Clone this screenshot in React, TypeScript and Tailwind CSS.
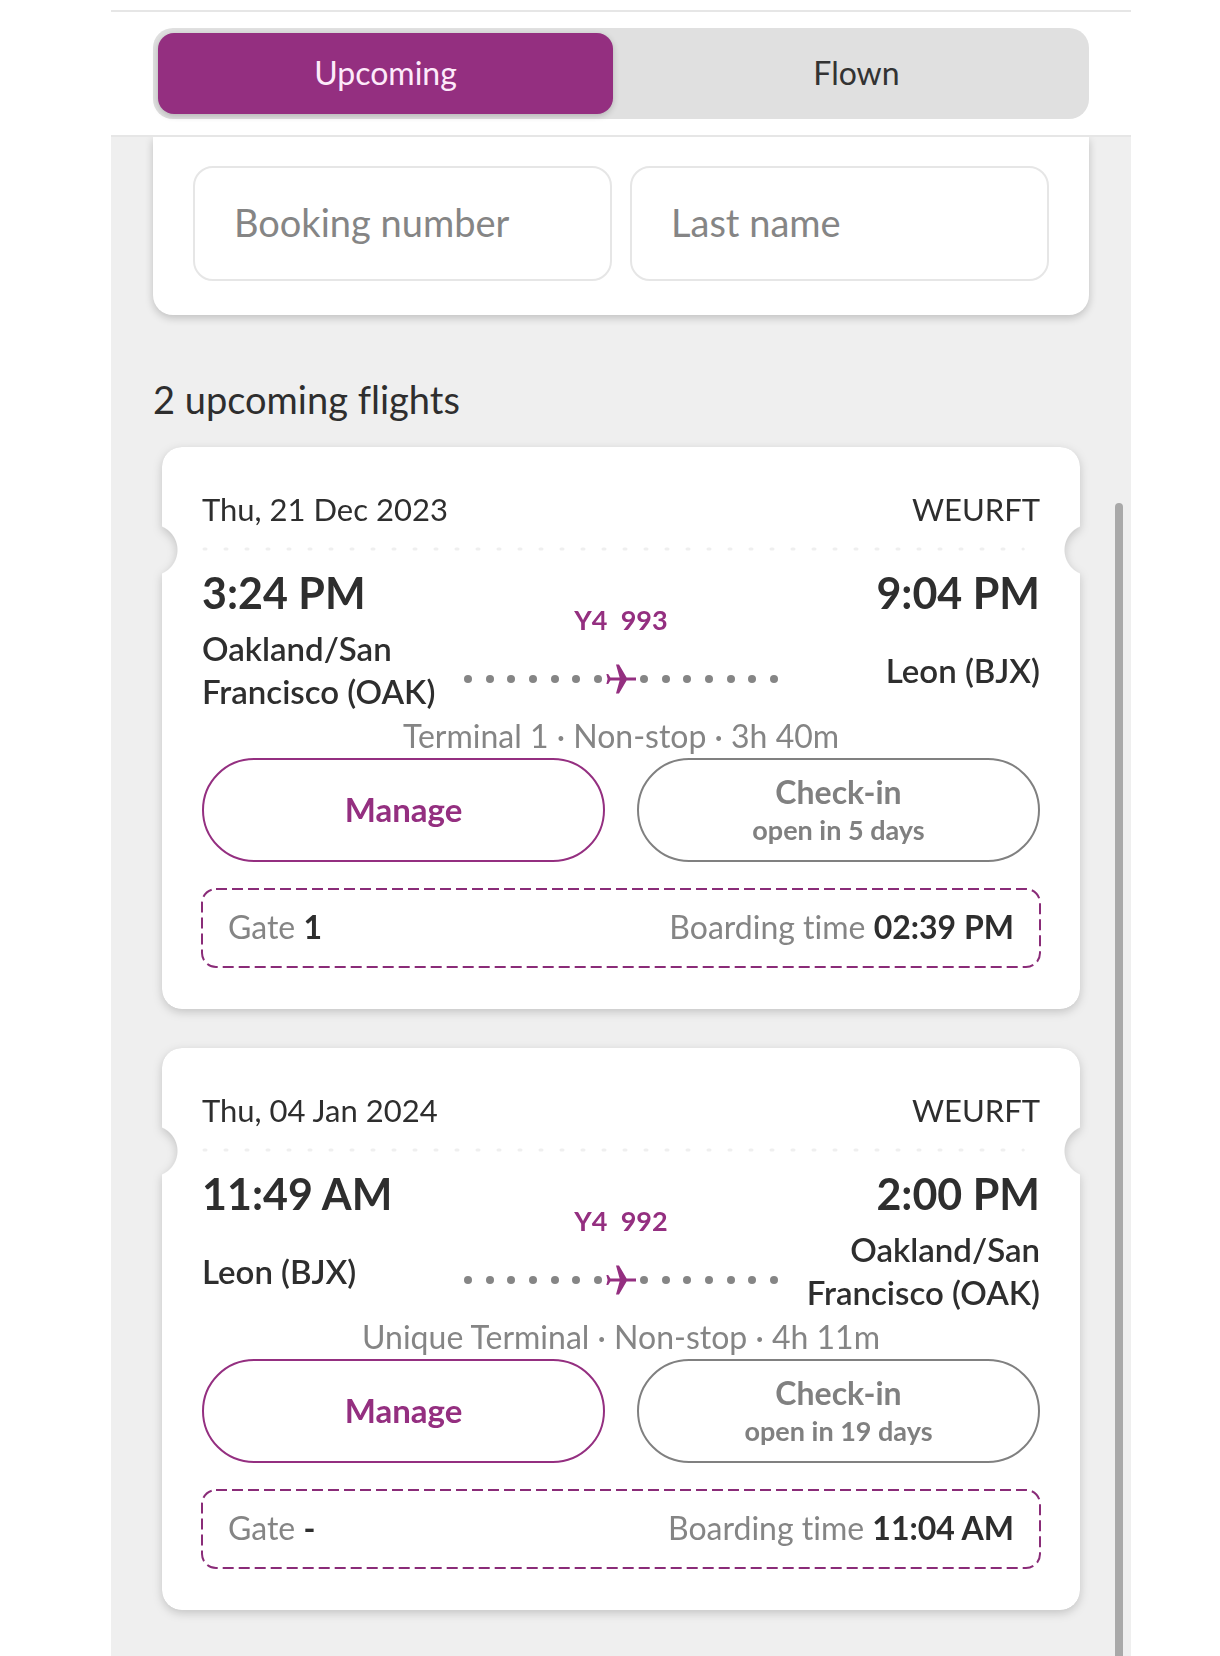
import { useState } from 'react'
import clsx from 'clsx'

interface Stop {
  time: string
  place: string
}

interface Flight {
  date: string
  booking: string
  code: string
  from: Stop
  to: Stop
  details: string
  checkIn: string
  gate: string
  boarding: string
}

const flights: Flight[] = [
  {
    date: 'Thu, 21 Dec 2023',
    booking: 'WEURFT',
    code: 'Y4  993',
    from: { time: '3:24 PM', place: 'Oakland/San Francisco (OAK)' },
    to: { time: '9:04 PM', place: 'Leon (BJX)' },
    details: 'Terminal 1 · Non-stop · 3h 40m',
    checkIn: 'open in 5 days',
    gate: '1',
    boarding: '02:39 PM',
  },
  {
    date: 'Thu, 04 Jan 2024',
    booking: 'WEURFT',
    code: 'Y4  992',
    from: { time: '11:49 AM', place: 'Leon (BJX)' },
    to: { time: '2:00 PM', place: 'Oakland/San Francisco (OAK)' },
    details: 'Unique Terminal · Non-stop · 4h 11m',
    checkIn: 'open in 19 days',
    gate: '-',
    boarding: '11:04 AM',
  },
]

const tabs = ['Upcoming', 'Flown']

function Tabs() {
  const [active, setActive] = useState('Upcoming')

  return (
    <div role="tablist" className="grid grid-cols-2 gap-4 rounded-[20px] bg-[#e0e0e0] p-[5px]">
      {tabs.map((tab) => (
        <button
          key={tab}
          type="button"
          role="tab"
          aria-selected={active === tab}
          onClick={() => setActive(tab)}
          className={clsx(
            'h-[81px] rounded-2xl pb-0.5 text-[32px] leading-10',
            active === tab ? 'bg-[#942f80] text-[#fdeafa] shadow-[0_2px_6px_rgba(0,0,0,0.2)]' : 'text-[#333]'
          )}
        >
          {tab}
        </button>
      ))}
    </div>
  )
}

function SearchField({ label }: { label: string }) {
  return (
    <input
      type="text"
      aria-label={label}
      placeholder={label}
      className="h-[115px] w-full min-w-0 rounded-[20px] border-2 border-[#e6e6e6] bg-white px-[39px] pb-1 text-[38px] text-[#333] outline-none placeholder:text-[#858585]"
    />
  )
}

function Plane() {
  return (
    <svg viewBox="0 0 30 30" className="h-[30px] w-[30px] shrink-0" fill="#942f80" aria-hidden="true">
      <path d="M30 13.4v3.2H20.6L13 29.4h-3L13.6 16.6H4.4L2.2 20H.4L1.6 15 .4 10h1.8l2.2 3.4h9.2L10 .6h3l7.6 12.8z" />
    </svg>
  )
}

function Dots() {
  return (
    <div className="flex flex-1 justify-between">
      {[0, 1, 2, 3, 4, 5, 6].map((dot) => (
        <span key={dot} className="h-2 w-2 rounded-full bg-[#858585]" />
      ))}
    </div>
  )
}

function StopInfo({ stop, end = false }: { stop: Stop; end?: boolean }) {
  return (
    <div className={clsx('flex min-w-0 flex-col gap-2', end && 'text-right')}>
      <div className="text-[43px] leading-[52px] font-bold">{stop.time}</div>
      <div className="flex min-h-[86px] flex-col justify-center text-[33px] leading-[43px] font-semibold">{stop.place}</div>
    </div>
  )
}

function FlightCard({ flight }: { flight: Flight }) {
  return (
    <li className="drop-shadow-[0_3px_5px_rgba(0,0,0,0.18)]">
      <article className="rounded-[20px] bg-white px-10 pt-[41px] pb-10 [mask-composite:intersect] [mask-image:radial-gradient(circle_at_-10px_103px,transparent_25px,black_26px),radial-gradient(circle_at_calc(100%+10px)_103px,transparent_25px,black_26px)]">
        <div className="flex h-[43px] items-center justify-between text-[31px]">
          <span>{flight.date}</span>
          <span>{flight.booking}</span>
        </div>
        <svg className="mt-4 block h-1 w-full" aria-hidden="true">
          <line x1="2" y1="2" x2="98%" y2="2" stroke="#efefef" strokeWidth="3" strokeLinecap="round" strokeDasharray="2 19" />
        </svg>

        <div className="mt-4 grid grid-cols-[minmax(0,1fr)_314px_minmax(0,1fr)]">
          <StopInfo stop={flight.from} />
          <div className="flex flex-col items-center pt-[37px]">
            <div className="text-[27px] leading-8 font-bold whitespace-pre text-[#942f80]">{flight.code}</div>
            <div className="mt-7 flex w-full items-center gap-1">
              <Dots />
              <Plane />
              <Dots />
            </div>
          </div>
          <StopInfo stop={flight.to} end />
        </div>

        <div className="text-center text-[32px] leading-[45px] text-[#858585]">{flight.details}</div>

        <div className="grid grid-cols-2 gap-8">
          <button type="button" className="h-[104px] rounded-full border-2 border-[#942f80] text-[33px] font-bold text-[#942f80]">
            Manage
          </button>
          <button type="button" className="h-[104px] rounded-full border-2 border-[#808080] font-bold text-[#808080]">
            <span className="block text-[32px] leading-10">Check-in</span>
            <span className="block text-[27px] leading-9">{flight.checkIn}</span>
          </button>
        </div>

        <div className="relative mt-6 flex h-[83px] items-center justify-between px-[26px] pb-0.5 text-[32px] text-[#858585]">
          <svg className="absolute inset-0 h-full w-full overflow-visible" aria-hidden="true">
            <rect x="0" y="3" width="100%" height="78" rx="14" fill="none" stroke="#8a2c78" strokeWidth="2" strokeDasharray="11 5" />
          </svg>
          <span>
            Gate <b className="text-[#2e2e2e]">{flight.gate}</b>
          </span>
          <span>
            Boarding time <b className="text-[#2e2e2e]">{flight.boarding}</b>
          </span>
        </div>
      </article>
    </li>
  )
}

export default function App() {
  return (
    <div className="min-h-screen bg-white pl-[22px] font-['Lato','Liberation_Sans',sans-serif] text-[#2e2e2e] [font-variant-ligatures:none]">
      <div className="mx-auto flex min-h-screen max-w-[1020px] flex-col pt-2.5">
        <header className="relative z-10 border-y-2 border-[#e6e6e6] bg-white px-[42px] py-4">
          <Tabs />
        </header>

        <main className="relative flex-1 bg-[#efefef] px-[42px] pb-11">
          <form className="grid grid-cols-2 gap-[18px] rounded-b-[20px] bg-white px-10 pt-[29px] pb-[34px] shadow-[0_3px_8px_rgba(0,0,0,0.2)]">
            <SearchField label="Booking number" />
            <SearchField label="Last name" />
          </form>

          <h1 className="mt-[58px] text-[38px] leading-[52px]">2 upcoming flights</h1>

          <ul className="mt-[22px] flex flex-col gap-[39px] px-[9px]">
            {flights.map((flight) => (
              <FlightCard key={flight.date} flight={flight} />
            ))}
          </ul>

          {/* scroll thumb */}
          <div className="absolute top-[366px] right-2 bottom-0 w-2 rounded-t-full bg-[#a9a9a9]" />
        </main>
      </div>
    </div>
  )
}
